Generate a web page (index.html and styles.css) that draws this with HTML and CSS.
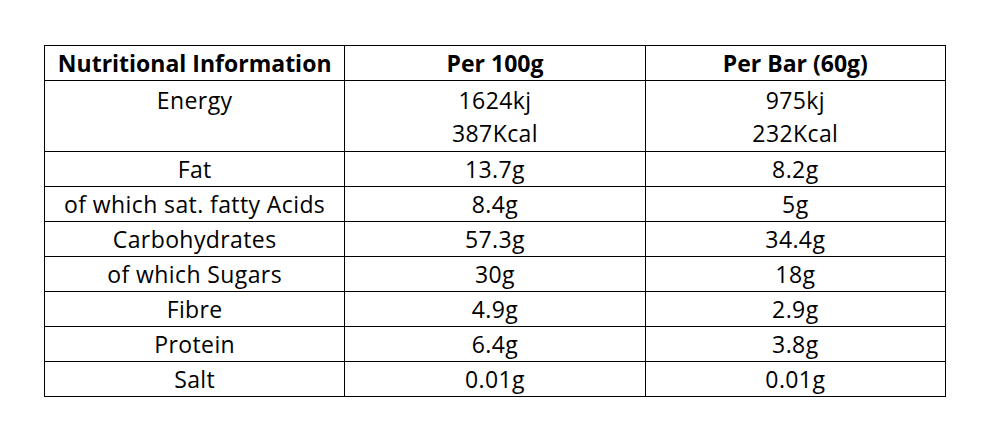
FILE: index.html
```html
<!DOCTYPE html>
<html lang="en">
<head>
    <meta charset="UTF-8">
    <meta name="viewport" content="width=device-width, initial-scale=1.0">
    <title>Nutritional Information</title>
    <link rel="stylesheet" href="styles.css">
</head>
<body>

    <table class="nutrition">
        <thead>
            <tr>
                <th>Nutritional Information</th>
                <th>Per 100g</th>
                <th>Per Bar (60g)</th>
            </tr>
        </thead>
        <tbody>
            <tr class="energy">
                <td>Energy</td>
                <td>1624kj<br>387Kcal</td>
                <td>975kj<br>232Kcal</td>
            </tr>
            <tr>
                <td>Fat</td>
                <td>13.7g</td>
                <td>8.2g</td>
            </tr>
            <tr>
                <td>of which sat. fatty Acids</td>
                <td>8.4g</td>
                <td>5g</td>
            </tr>
            <tr>
                <td>Carbohydrates</td>
                <td>57.3g</td>
                <td>34.4g</td>
            </tr>
            <tr>
                <td>of which Sugars</td>
                <td>30g</td>
                <td>18g</td>
            </tr>
            <tr>
                <td>Fibre</td>
                <td>4.9g</td>
                <td>2.9g</td>
            </tr>
            <tr>
                <td>Protein</td>
                <td>6.4g</td>
                <td>3.8g</td>
            </tr>
            <tr>
                <td>Salt</td>
                <td>0.01g</td>
                <td>0.01g</td>
            </tr>
        </tbody>
    </table>

</body>
</html>
```

FILE: styles.css
```css
* {
    margin: 0;
    padding: 0;
    box-sizing: border-box;
}
body {
    background: #ffffff;
    font-family: 'Open Sans', 'Lato', sans-serif;
    color: #000000;
    padding: 45px 0 0 44px;
}
.nutrition {
    border-collapse: collapse;
    table-layout: fixed;
    width: 902px;
}
.nutrition th,
.nutrition td {
    border: 1px solid #000000;
    text-align: center;
    vertical-align: top;
    font-size: 23px;
    line-height: 31px;
    width: 33.33%;
}
.nutrition th {
    font-weight: 700;
    padding: 2px 4px 1px;
}
.nutrition td {
    font-weight: 400;
    letter-spacing: 0.4px;
    padding: 2px 4px 1px;
}
.nutrition .energy td {
    line-height: 33px;
    padding: 3px 4px 1px;
}
```
